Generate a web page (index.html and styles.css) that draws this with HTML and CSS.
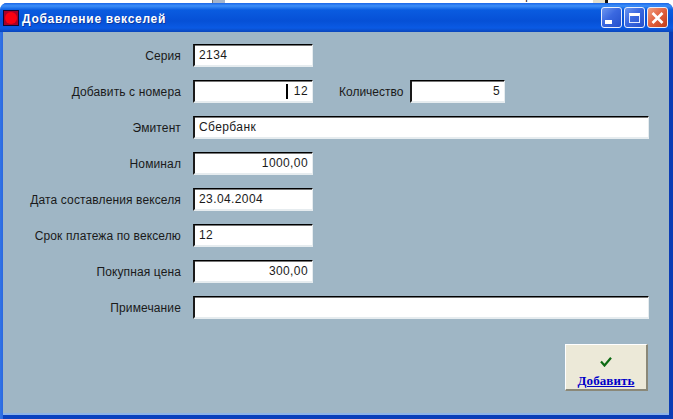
FILE: index.html
```html
<!DOCTYPE html>
<html lang="ru">
<head>
<meta charset="utf-8">
<title>Добавление векселей</title>
<link rel="stylesheet" href="styles.css">
</head>
<body>
<div class="behind">
  <span class="behind-line line-a"></span><span class="behind-grey"></span><span class="behind-cell cell-a">1</span>
  <span class="behind-cell cell-b">21.34</span>
  <span class="behind-cell cell-c">4</span>
  <span class="behind-cell cell-d">Сбербанк</span>
  <span class="behind-end"></span>
</div>
<div class="window">
  <div class="titlebar">
    <span class="app-icon"><span class="app-dot"></span></span>
    <span class="title">Добавление векселей</span>
    <span class="controls">
      <span class="ctl"><span class="glyph-min"></span></span>
      <span class="ctl"><span class="glyph-max"></span></span>
      <span class="ctl ctl-close">
        <svg width="13" height="12" viewBox="0 0 13 12"><path d="M1.5 1 L11.5 11 M11.5 1 L1.5 11" stroke="#fff" stroke-width="2.6" fill="none"/></svg>
      </span>
    </span>
  </div>
  <div class="body">
    <div class="row"><label class="lbl">Серия</label><div class="field w-120">2134</div></div>
    <div class="row"><label class="lbl">Добавить с номера</label><div class="field w-120 num"><span class="caret"></span>12</div><label class="lbl-qty">Количество</label><div class="field w-95 num">5</div></div>
    <div class="row"><label class="lbl">Эмитент</label><div class="field w-456">Сбербанк</div></div>
    <div class="row"><label class="lbl">Номинал</label><div class="field w-120 num">1000,00</div></div>
    <div class="row"><label class="lbl">Дата составления векселя</label><div class="field w-120">23.04.2004</div></div>
    <div class="row"><label class="lbl">Срок платежа по векселю</label><div class="field w-120">12</div></div>
    <div class="row"><label class="lbl">Покупная цена</label><div class="field w-120 num">300,00</div></div>
    <div class="row"><label class="lbl">Примечание</label><div class="field w-456"></div></div>
    <div class="actions">
      <div class="add-btn">
        <svg class="add-check" width="12" height="10" viewBox="0 0 12 10"><path d="M1 4.5 L4.5 8.5 L11 .8" stroke="#0c6a12" stroke-width="2.2" fill="none"/></svg>
        <span class="add-text">Добавить</span>
      </div>
    </div>
  </div>
</div>
</body>
</html>
```
FILE: styles.css
```css
* { box-sizing: border-box; }
html, body { margin: 0; padding: 0; }
body {
  width: 673px;
  height: 419px;
  overflow: hidden;
  background: #fff;
  font-family: "Liberation Sans", Arial, sans-serif;
}
.behind {
  height: 3px;
  display: flex;
  overflow: hidden;
  background: #fff;
}
.behind-line { width: 1px; height: 3px; background: #777; flex: none; }
.line-a { margin-left: 212px; }
.behind-grey { width: 12px; height: 3px; background: #a4b4cc; flex: none; }
.behind-cell {
  flex: none;
  font-size: 11px;
  line-height: 13px;
  height: 13px;
  margin-top: -10px;
  color: #222;
}
.cell-a { width: 47px; padding-left: 3px; }
.cell-b { width: 100px; }
.cell-c { width: 133px; }
.cell-d { width: 88px; }
.behind-end { width: 15px; height: 3px; background: #e4e0cc; border-right: 3px solid #111; flex: none; }
.window {
  height: 416px;
  display: flex;
  flex-direction: column;
  background: linear-gradient(90deg, #3274e6 0, #2a68e0 3px, #0a42c0 3px, #0a3cb4 100%);
  border-radius: 7px 7px 0 0;
  overflow: hidden;
}
.titlebar {
  height: 29px;
  flex: none;
  display: flex;
  align-items: center;
  padding: 0 5px 0 3px;
  background: linear-gradient(180deg, #1a66e8 0%, #3c8ef8 10%, #0a5ce0 24%, #0650d6 62%, #0a5ae4 86%, #0a46bc 100%);
}
.app-icon {
  width: 16px;
  height: 16px;
  background: #a80028;
  border: 1px solid #100830;
  display: flex;
  align-items: center;
  justify-content: center;
  margin-right: 3px;
}
.app-dot { width: 12px; height: 12px; background: #fa0010; border-radius: 50%; }
.title {
  color: #fff;
  font: bold 12px "Liberation Sans", Arial, sans-serif;
  letter-spacing: .7px;
  text-shadow: 1px 1px 0 #0a3aa0;
  flex: 1;
  padding-top: 2px;
}
.controls { display: flex; gap: 2px; }
.ctl {
  width: 21px;
  height: 21px;
  border: 1px solid #e8eefc;
  border-radius: 3px;
  background: linear-gradient(135deg, #6c96f0 0%, #3a68e0 45%, #2450cc 100%);
  display: flex;
  align-items: center;
  justify-content: center;
}
.ctl-close { background: linear-gradient(135deg, #f0a080 0%, #e2603e 50%, #c03c1a 100%); }
.glyph-min { width: 7px; height: 4px; background: #fff; margin: 8px 6px 0 0; }
.glyph-max { width: 11px; height: 10px; border: 1px solid #dfe9ff; border-top: 3px solid #fff; }
.body {
  flex: 1;
  margin: 0 4px 4px 3px;
  background: #9fb6c5;
  border-bottom: 2px solid #8cb2e8;
  padding-top: 12px;
  display: flex;
  flex-direction: column;
}
.row { display: flex; align-items: center; height: 23px; margin-bottom: 13px; }
.lbl {
  width: 178px;
  text-align: right;
  font-size: 12px;
  letter-spacing: .12px;
  color: #1a1a1a;
  margin-right: 12px;
  white-space: nowrap;
}
.lbl-qty {
  width: 71px;
  font-size: 12px;
  letter-spacing: 0;
  color: #1a1a1a;
  margin-left: 26px;
}
.field {
  height: 23px;
  background: #fff;
  border-top: 1px solid #000;
  border-left: 2px solid #1a1a1a;
  border-right: 1px solid #e6ecef;
  border-bottom: 2px solid #e6ecef;
  box-shadow: inset 0 1px 0 #777;
  font-size: 12px;
  letter-spacing: .4px;
  color: #1a1a1a;
  padding: 0 4px;
  display: flex;
  align-items: center;
}
.num { justify-content: flex-end; }
.w-120 { width: 120px; }
.w-95 { width: 95px; }
.w-456 { width: 456px; }
.caret { width: 2px; height: 15px; background: #000; margin-right: 6px; }
.actions { display: flex; justify-content: flex-end; padding-right: 21px; margin-top: 12px; }
.add-btn {
  width: 83px;
  height: 47px;
  background: #ece9d8;
  border-top: 1px solid #fff;
  border-left: 1px solid #fff;
  border-right: 2px solid #8a8878;
  border-bottom: 2px solid #8a8878;
  display: flex;
  flex-direction: column;
  align-items: center;
  padding-top: 12px;
}
.add-check { flex: none; }
.add-text {
  font: bold 13px "Liberation Serif", "Times New Roman", serif;
  color: #0000c8;
  text-decoration: underline;
  margin-top: 6px;
  letter-spacing: .1px;
}
```
